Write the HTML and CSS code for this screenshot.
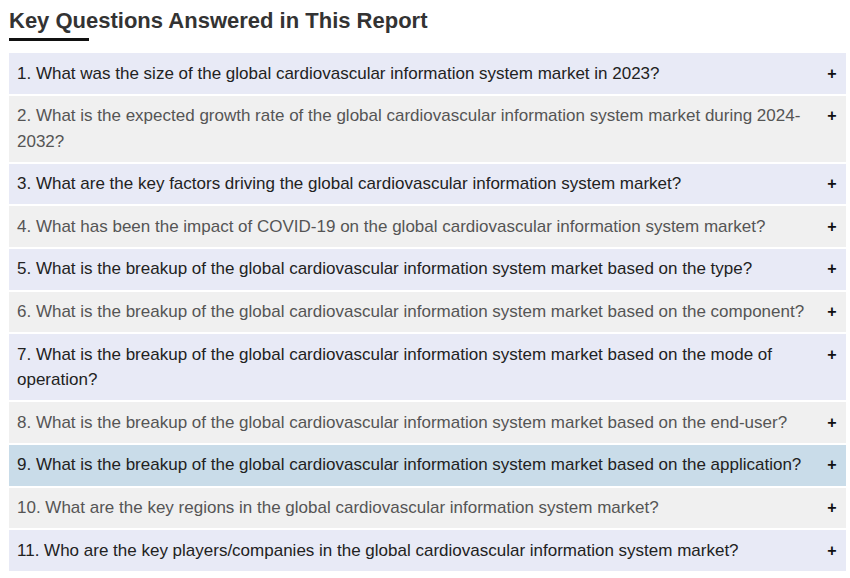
FILE: index.html
```html
<!DOCTYPE html>
<html>
<head>
<meta charset="utf-8">
<link rel="stylesheet" href="styles.css">
</head>
<body>
<div class="wrap">
  <h2 class="title">Key Questions Answered in This Report</h2>
  <div class="faq">
    <div class="item odd"><span class="q">1. What was the size of the global cardiovascular information system market in 2023?</span><span class="plus">+</span></div>
    <div class="item even"><span class="q">2. What is the expected growth rate of the global cardiovascular information system market during 2024-2032?</span><span class="plus">+</span></div>
    <div class="item odd"><span class="q">3. What are the key factors driving the global cardiovascular information system market?</span><span class="plus">+</span></div>
    <div class="item even"><span class="q">4. What has been the impact of COVID-19 on the global cardiovascular information system market?</span><span class="plus">+</span></div>
    <div class="item odd"><span class="q">5. What is the breakup of the global cardiovascular information system market based on the type?</span><span class="plus">+</span></div>
    <div class="item even"><span class="q">6. What is the breakup of the global cardiovascular information system market based on the component?</span><span class="plus">+</span></div>
    <div class="item odd"><span class="q">7. What is the breakup of the global cardiovascular information system market based on the mode of operation?</span><span class="plus">+</span></div>
    <div class="item even"><span class="q">8. What is the breakup of the global cardiovascular information system market based on the end-user?</span><span class="plus">+</span></div>
    <div class="item active"><span class="q">9. What is the breakup of the global cardiovascular information system market based on the application?</span><span class="plus">+</span></div>
    <div class="item even"><span class="q">10. What are the key regions in the global cardiovascular information system market?</span><span class="plus">+</span></div>
    <div class="item odd"><span class="q">11. Who are the key players/companies in the global cardiovascular information system market?</span><span class="plus">+</span></div>
  </div>
</div>
</body>
</html>
```
FILE: styles.css
```css
html, body {
  margin: 0;
  padding: 0;
  background: #ffffff;
  font-family: "Liberation Sans", Arial, sans-serif;
}
.wrap {
  padding: 8px 4px 0 9px;
  width: 837px;
}
.title {
  margin: 0;
  font-size: 22px;
  font-weight: bold;
  color: #333333;
  line-height: 26px;
}
.title::after {
  content: "";
  display: block;
  width: 80px;
  height: 3px;
  background: #111111;
  margin-top: 4px;
}
.faq {
  margin-top: 12px;
  display: flex;
  flex-direction: column;
  gap: 2px;
}
.item {
  display: flex;
  align-items: flex-start;
  padding: 7.5px 9px 7.5px 8px;
  font-size: 17px;
  line-height: 25.6px;
}
.item .q {
  flex: 1;
  padding-right: 22px;
}
.item .plus {
  font-weight: bold;
  font-size: 16px;
  color: #111111;
  width: 10px;
  text-align: center;
}
.odd {
  background: #e8eaf6;
  color: #222222;
}
.even {
  background: #f0f0f0;
  color: #555555;
}
.active {
  background: #c9dce9;
  color: #222222;
}
```
